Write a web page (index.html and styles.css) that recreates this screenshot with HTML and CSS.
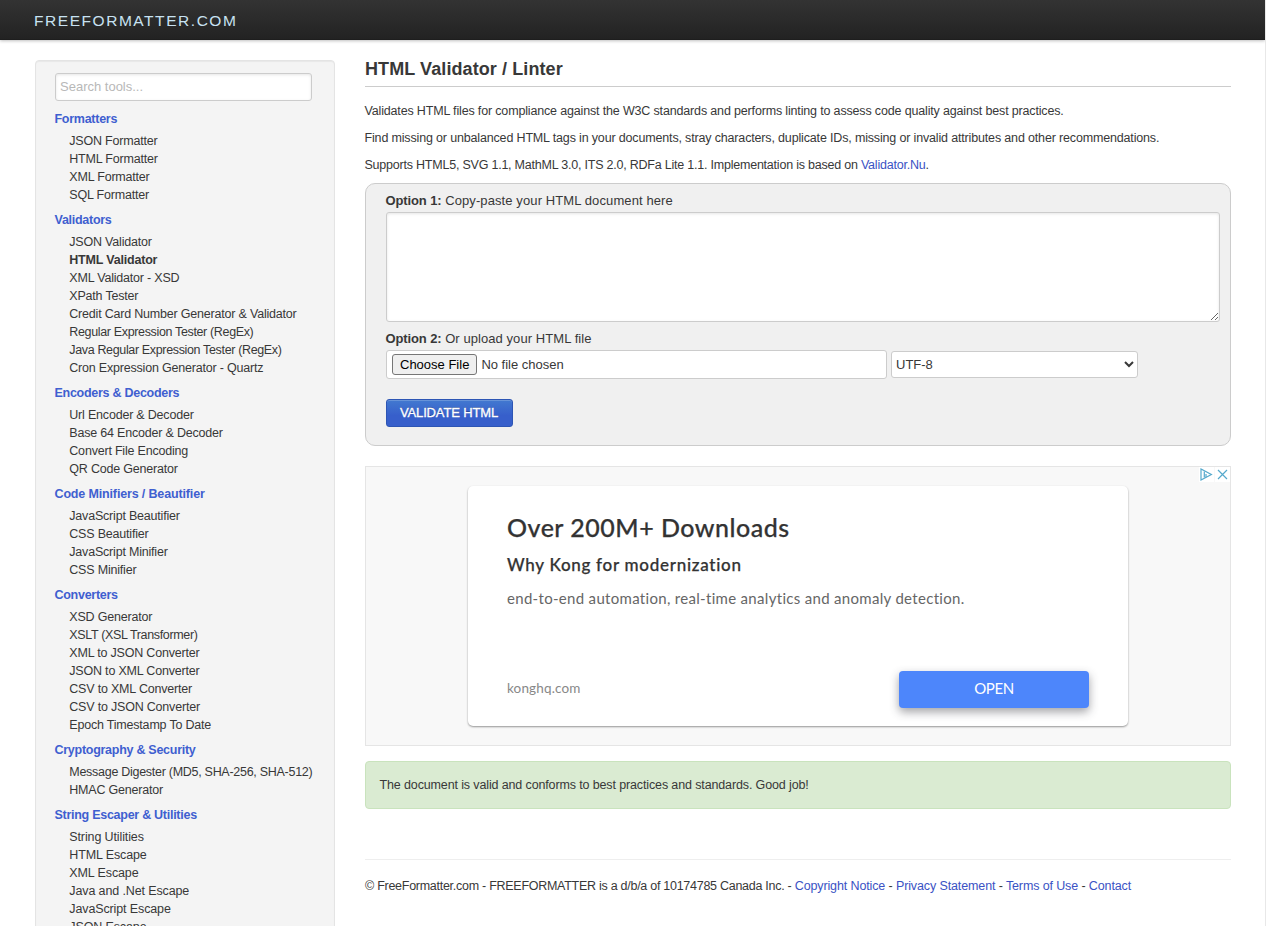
FILE: index.html
```html
<!DOCTYPE html>
<html lang="en">
<head>
<meta charset="utf-8">
<title>HTML Validator / Linter</title>
<link rel="stylesheet" href="styles.css">
</head>
<body>
<div class="page">
<header class="topbar"><a class="brand">FREEFORMATTER.COM</a></header>
<div class="columns">
<nav class="sidebar">
<input class="search" type="text" placeholder="Search tools...">
<h3>Formatters</h3>
<ul><li>JSON Formatter</li><li>HTML Formatter</li><li>XML Formatter</li><li>SQL Formatter</li></ul>
<h3>Validators</h3>
<ul><li>JSON Validator</li><li class="current">HTML Validator</li><li>XML Validator - XSD</li><li>XPath Tester</li><li>Credit Card Number Generator &amp; Validator</li><li class="tight">Regular Expression Tester (RegEx)</li><li class="tight">Java Regular Expression Tester (RegEx)</li><li>Cron Expression Generator - Quartz</li></ul>
<h3>Encoders &amp; Decoders</h3>
<ul><li>Url Encoder &amp; Decoder</li><li>Base 64 Encoder &amp; Decoder</li><li>Convert File Encoding</li><li>QR Code Generator</li></ul>
<h3 class="loose">Code Minifiers / Beautifier</h3>
<ul><li>JavaScript Beautifier</li><li>CSS Beautifier</li><li>JavaScript Minifier</li><li>CSS Minifier</li></ul>
<h3>Converters</h3>
<ul><li>XSD Generator</li><li class="tight">XSLT (XSL Transformer)</li><li>XML to JSON Converter</li><li>JSON to XML Converter</li><li>CSV to XML Converter</li><li>CSV to JSON Converter</li><li>Epoch Timestamp To Date</li></ul>
<h3>Cryptography &amp; Security</h3>
<ul><li class="long">Message Digester (MD5, SHA-256, SHA-512)</li><li>HMAC Generator</li></ul>
<h3>String Escaper &amp; Utilities</h3>
<ul class="escapes"><li>String Utilities</li><li>HTML Escape</li><li>XML Escape</li><li>Java and .Net Escape</li><li>JavaScript Escape</li><li>JSON Escape</li></ul>
</nav>
<main class="content">
<h1>HTML Validator / Linter</h1>
<p>Validates HTML files for compliance against the W3C standards and performs linting to assess code quality against best practices.</p>
<p>Find missing or unbalanced HTML tags in your documents, stray characters, duplicate IDs, missing or invalid attributes and other recommendations.</p>
<p class="support">Supports HTML5, SVG 1.1, MathML 3.0, ITS 2.0, RDFa Lite 1.1. Implementation is based on <a>Validator.Nu</a>.</p>
<form class="panel">
<label><b>Option 1:</b> Copy-paste your HTML document here</label>
<textarea></textarea>
<label class="second"><b>Option 2:</b> Or upload your HTML file</label>
<div class="upload">
<input class="file" type="file">
<select><option>UTF-8</option></select>
</div>
<button class="submit" type="button">VALIDATE HTML</button>
</form>
<section class="ad">
<div class="adchoices">
<svg width="15" height="15" viewBox="0 0 15 15"><path d="M2 2v11L12.4 7.5z"/><path d="M5.3 4.5v6M7 7v3"/></svg>
<svg width="15" height="15" viewBox="0 0 15 15"><path d="M3 3l9 9M12 3l-9 9"/></svg>
</div>
<div class="card">
<h2>Over 200M+ Downloads</h2>
<h4>Why Kong for modernization</h4>
<div class="desc">end-to-end automation, real-time analytics and anomaly detection.</div>
<div class="action"><span class="domain">konghq.com</span><a class="open">OPEN</a></div>
</div>
</section>
<div class="success">The document is valid and conforms to best practices and standards. Good job!</div>
<footer><span class="legal">© FreeFormatter.com - FREEFORMATTER is a d/b/a of 10174785 Canada Inc. - </span><a>Copyright Notice</a> - <a>Privacy Statement</a> - <a>Terms of Use</a> - <a>Contact</a></footer>
</main>
</div>
</div>
</body>
</html>
```
FILE: styles.css
```css
* { box-sizing: border-box; }
body { margin: 0; height: 926px; overflow: hidden; background: #fff; color: #383838; font: 12.5px/18px "Liberation Sans", Arial, sans-serif; }
.page { height: 926px; border-right: 1px solid #e8e8e8; overflow: hidden; }
.topbar { position: relative; height: 40px; padding-left: 34px; background: linear-gradient(#333, #222); box-shadow: 0 1px 3px rgba(0,0,0,.25), 0 -1px 0 rgba(0,0,0,.1) inset; }
.brand { color: #c8e2f2; font-size: 15.5px; line-height: 41px; letter-spacing: 1.55px; }
.columns { display: flex; align-items: flex-start; gap: 30px; padding: 20px 34px 0 35px; }
.sidebar { flex: none; width: 300px; height: 1000px; padding: 12px 19px; background: #f4f4f4; border: 1px solid #e4e4e4; border-radius: 4px; box-shadow: inset 0 1px 1px rgba(0,0,0,.05); }
input, textarea, select { font: 13px/18px "Liberation Sans", Arial, sans-serif; color: #383838; background: #fff; border: 1px solid #ccc; border-radius: 3px; }
.search { display: block; width: 257px; height: 28px; margin: 0; padding: 3px 4px 5px; box-shadow: inset 0 1px 3px rgba(0,0,0,.1); }
.search::placeholder { color: #b8b8b8; }
h3 { margin: 9px 0 4px -.5px; color: #3f5fd0; font-size: 12.5px; line-height: 18px; font-weight: bold; letter-spacing: -.27px; }
.loose { letter-spacing: -.15px; }
ul { margin: 0 0 7px; padding: 0 0 0 14.3px; list-style: none; letter-spacing: -.2px; }
ul + h3 { margin-top: 0; }
li { white-space: nowrap; }
.tight { letter-spacing: -.35px; }
.long { letter-spacing: -.28px; }
.escapes { letter-spacing: -.12px; }
.current { font-weight: bold; }
.content { flex: 1; min-width: 0; }
h1 { margin: 0 0 15px; height: 27px; border-bottom: 1px solid #ccc; font-size: 18px; line-height: 18px; letter-spacing: .09px; }
p { margin: 0 0 9px -.5px; white-space: nowrap; letter-spacing: -.16px; }
.support { letter-spacing: -.22px; }
a { color: #3a52c4; }
.panel { height: 263px; padding: 8px 10px 0 20px; background: #f0f0f0; border: 1px solid #ccc; border-radius: 10px; font-size: 13px; }
.panel label { display: block; height: 20px; margin-left: -.5px; letter-spacing: .1px; }
.panel label b { letter-spacing: -.12px; }
textarea { display: block; width: 834px; height: 110px; margin: 0; box-shadow: inset 0 1px 3px rgba(0,0,0,.1); }
.panel label.second { margin-top: 8px; letter-spacing: .07px; }
.upload { display: flex; align-items: center; gap: 4px; height: 29px; }
.file { width: 501px; height: 29px; padding: 3px 5px; line-height: 21px; }
.file::file-selector-button { height: 21px; margin: 0 4px 0 0; padding: 0 7px; font: 13px "Liberation Sans", Arial, sans-serif; color: #000; background: #efefef; border: 1px solid #767676; border-radius: 3px; }
select { width: 247px; height: 27px; padding: 0; }
.submit { display: block; width: 127px; height: 28px; margin-top: 20px; padding: 0 1px 2px 0; color: #fff; font: 13px "Liberation Sans", Arial, sans-serif; letter-spacing: -.15px; -webkit-text-stroke: .3px #fff; background: linear-gradient(#4279d0, #375fcb 60%); border: 1px solid #2d55b4; border-radius: 3px; box-shadow: inset 0 1px 0 rgba(255,255,255,.2); text-shadow: 0 -1px 0 rgba(0,0,0,.25); }
.ad { position: relative; height: 280px; margin-top: 20px; padding: 19px 102px; background: #f8f8f8; border: 1px solid #e5e5e5; }
.adchoices { position: absolute; top: 0; right: 0; display: flex; gap: 1px; }
.adchoices svg { background: #fff; fill: none; stroke: #55a9cc; stroke-width: 1.2; }
.card { height: 240px; padding: 25px 39px 0; background: #fff; border-radius: 5px; box-shadow: 0 1px 2px rgba(0,0,0,.4); font-family: Lato, sans-serif; }
.card h2 { margin: 0; color: #333; font-size: 25px; line-height: 32px; font-weight: 500; letter-spacing: .5px; -webkit-text-stroke: .25px #333; }
.card h4 { margin: 11px 0 10px; color: #333; font-size: 17px; line-height: 22px; font-weight: 500; letter-spacing: .72px; -webkit-text-stroke: .25px #333; }
.desc { color: #666; font-size: 15px; line-height: 24px; letter-spacing: .31px; }
.action { display: flex; align-items: center; justify-content: space-between; margin-top: 61px; }
.domain { padding-bottom: 3px; color: #888; font-size: 13.5px; letter-spacing: .15px; }
.open { width: 190px; height: 37px; border-radius: 4px; background: #4d86fb; color: #fff; font-size: 15px; line-height: 35px; letter-spacing: -.4px; text-align: center; box-shadow: 0 4px 10px rgba(50,50,60,.45); }
.success { height: 48px; margin-top: 15px; padding: 14px 13.5px; background: #daebd2; border: 1px solid #c9e3bd; border-radius: 4px; letter-spacing: -.13px; }
footer { margin-top: 50px; padding-top: 17px; border-top: 1px solid #eee; white-space: nowrap; letter-spacing: -.12px; }
.legal { letter-spacing: -.27px; }
```
